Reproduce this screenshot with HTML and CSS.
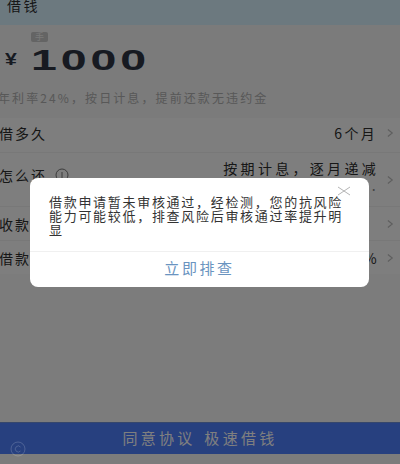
FILE: index.html
```html
<!DOCTYPE html>
<html lang="zh-CN">
<head>
  <meta charset="UTF-8" />
  <meta name="viewport" content="width=device-width, initial-scale=1.0"/>
  <title>借钱</title>
  <link rel="stylesheet" href="styles.css">
</head>
<body>
  <div class="page">
    <div class="header">借钱</div>

    <div class="amount-box">
      <span class="badge">手</span>
      <div class="amount">
        <span class="currency">¥</span>
        <span class="value">1000</span>
      </div>
      <div class="rate">年利率24%，按日计息，提前还款无违约金</div>
    </div>

    <div class="rows">
      <div class="row row-first">
        <span class="label">借多久</span>
        <span class="row-value">6个月</span>
        <svg class="chevron" viewBox="0 0 8 10"><path d="M1 1l5 4-5 4" /></svg>
      </div>
      <div class="row row-tall">
        <span class="label label-low">怎么还
          <svg class="info" viewBox="0 0 14 14"><circle cx="7" cy="7" r="6" /><path d="M7 4v6" /></svg>
        </span>
        <div class="row-value plan">
          <span>按期计息，逐月递减</span>
          <span class="plan-dots">...</span>
        </div>
        <svg class="chevron" viewBox="0 0 8 10"><path d="M1 1l5 4-5 4" /></svg>
      </div>
      <div class="row">
        <span class="label">收款</span>
        <span class="row-value">）</span>
        <svg class="chevron" viewBox="0 0 8 10"><path d="M1 1l5 4-5 4" /></svg>
      </div>
      <div class="row">
        <span class="label">借款</span>
        <span class="row-value">%</span>
        <svg class="chevron" viewBox="0 0 8 10"><path d="M1 1l5 4-5 4" /></svg>
      </div>
    </div>

    <div class="cta">同意协议 极速借钱</div>
  </div>

  <div class="overlay">
    <div class="dialog">
      <svg class="close" viewBox="0 0 14 10"><path d="M1 1l12 8M13 1L1 9" /></svg>
      <p class="message">借款申请暂未审核通过，经检测，您的抗风险能力可能较低，排查风险后审核通过率提升明显</p>
      <div class="action">立即排查</div>
    </div>
  </div>

  <svg class="watermark" viewBox="0 0 16 16"><circle cx="8" cy="8" r="7" /><path d="M10.5 6A3 3 0 1 0 10.5 10" /></svg>
</body>
</html>
```

FILE: styles.css
```css
* {
  margin: 0;
  padding: 0;
  box-sizing: border-box;
}

body {
  width: 400px;
  height: 464px;
  overflow: hidden;
  background: #f8f8f8;
  color: #2e2e2e;
  font-family: "Noto Sans CJK SC", "Liberation Sans", sans-serif;
}

.page {
  height: 464px;
  display: flex;
  flex-direction: column;
}

.header {
  height: 25px;
  padding: 0 0 0 7px;
  background: #d8f2ff;
  font-size: 14px;
  line-height: 11px;
  letter-spacing: 2.5px;
  overflow: hidden;
}

.amount-box {
  position: relative;
  height: 93px;
  background: #f6f6f6;
}

.badge {
  position: absolute;
  left: 31px;
  top: 7px;
  width: 17px;
  height: 10px;
  border-radius: 2px;
  background: #c8c8c8;
  color: #f4f4f4;
  font-size: 9px;
  line-height: 10px;
  text-align: center;
}

.amount {
  display: flex;
  align-items: center;
  height: 30px;
  margin-top: 20px;
  padding-left: 5px;
  color: #2e3443;
}

.currency {
  width: 26px;
  font-family: "Liberation Sans", sans-serif;
  font-size: 17px;
  font-weight: bold;
  transform: scaleX(1.25);
  transform-origin: left center;
}

.value {
  font-family: "Liberation Sans", sans-serif;
  font-size: 30px;
  font-weight: bold;
  line-height: 30px;
  letter-spacing: 2.5px;
  transform: scaleX(1.55);
  transform-origin: left center;
}

.rate {
  margin: 15px 0 0 -2px;
  color: #b0b0b0;
  font-size: 12px;
  line-height: 16px;
  letter-spacing: 2.1px;
  white-space: nowrap;
}

.rows {
  background: #fcfcfc;
}

.row {
  height: 34px;
  display: flex;
  align-items: center;
  border-top: 1px solid #f0f0f0;
  padding-right: 6px;
}

.row-first {
  border-top: 0;
  padding-bottom: 4px;
}

.row-tall {
  height: 54px;
  align-items: flex-start;
  padding-top: 5px;
}

.label {
  flex: 1;
  margin-left: -1px;
  font-size: 14px;
  letter-spacing: 2px;
  white-space: nowrap;
}

.label-low {
  display: flex;
  align-items: center;
  margin-top: 7px;
}

.info {
  width: 14px;
  height: 14px;
  margin-left: 8px;
  fill: none;
  stroke: #777;
  stroke-width: 1;
}

.row-value {
  margin-right: 8px;
  font-size: 14px;
  letter-spacing: 2.3px;
  white-space: nowrap;
}

.plan {
  display: flex;
  flex-direction: column;
  align-items: flex-end;
  line-height: 20px;
  letter-spacing: 3.3px;
}

.plan-dots {
  color: #888;
  line-height: 14px;
}

.chevron {
  width: 7px;
  height: 10px;
  flex: none;
  fill: none;
  stroke: #bdbdbd;
  stroke-width: 1.3;
}

.row-first .chevron {
  margin-left: 2px;
}

.row-tall .chevron {
  margin-top: 17px;
}

.cta {
  height: 32px;
  margin-top: auto;
  margin-bottom: 10px;
  background: #4e80ff;
  border-top: 1px solid #6d8fd8;
  color: #fff;
  font-size: 15px;
  line-height: 30px;
  letter-spacing: 3.3px;
  word-spacing: 2px;
  text-align: center;
}

.overlay {
  position: fixed;
  inset: 0;
  display: flex;
  align-items: center;
  justify-content: center;
  padding-right: 1px;
  background: rgba(0, 0, 0, 0.5);
}

.dialog {
  position: relative;
  width: 339px;
  height: 109px;
  background: #fff;
  border-radius: 8px;
  display: flex;
  flex-direction: column;
}

.close {
  position: absolute;
  right: 18px;
  top: 8px;
  width: 14px;
  height: 10px;
  fill: none;
  stroke: #b4b4b4;
  stroke-width: 1;
}

.message {
  height: 74px;
  padding: 17px 22px 0 19px;
  color: #333;
  font-size: 13px;
  line-height: 14px;
  letter-spacing: 1.7px;
  border-bottom: 1px solid #f0f0f0;
}

.action {
  flex: 1;
  color: #6a94c0;
  font-size: 15px;
  line-height: 32px;
  letter-spacing: 2.6px;
  text-align: center;
}

.watermark {
  position: fixed;
  left: 10px;
  top: 441px;
  width: 16px;
  height: 16px;
  fill: none;
  stroke: rgba(255, 255, 255, 0.18);
  stroke-width: 1;
}
```
